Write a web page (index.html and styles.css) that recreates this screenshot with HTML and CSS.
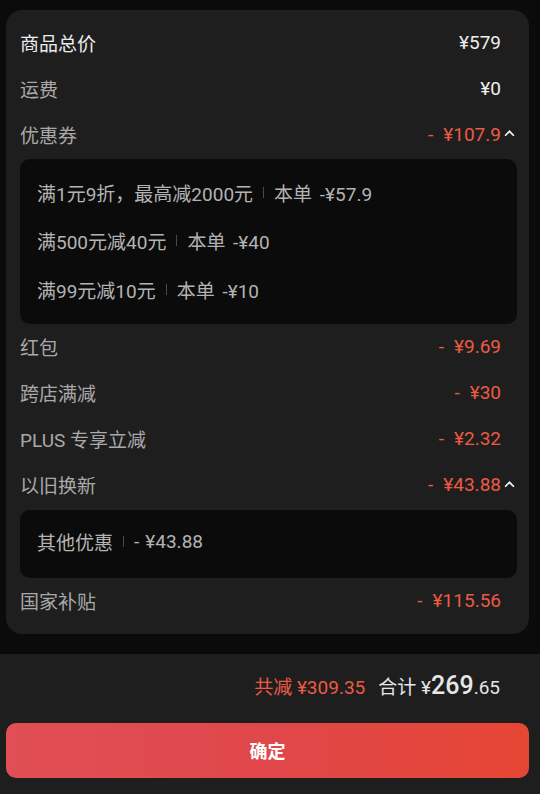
FILE: index.html
```html
<!DOCTYPE html>
<html lang="zh">
<head>
<meta charset="utf-8">
<link rel="stylesheet" href="styles.css">
</head>
<body>
<div class="page">
  <div class="card">
    <div class="row"><span class="label main">商品总价</span><span class="amt white">¥579</span></div>
    <div class="row"><span class="label">运费</span><span class="amt white">¥0</span></div>
    <div class="row"><span class="label">优惠券</span><span class="amt red">-<span class="gap"></span>¥107.9<svg class="caret" viewBox="0 0 10 7"><path d="M1 6 L5 2 L9 6" /></svg></span></div>
    <div class="box box-coupon">
      <div class="sub">满1元9折，最高减2000元<i class="sep"></i>本单 -¥57.9</div>
      <div class="sub">满500元减40元<i class="sep"></i>本单 -¥40</div>
      <div class="sub">满99元减10元<i class="sep"></i>本单 -¥10</div>
    </div>
    <div class="row"><span class="label">红包</span><span class="amt red">-<span class="gap"></span>¥9.69</span></div>
    <div class="row"><span class="label">跨店满减</span><span class="amt red">-<span class="gap"></span>¥30</span></div>
    <div class="row"><span class="label">PLUS 专享立减</span><span class="amt red">-<span class="gap"></span>¥2.32</span></div>
    <div class="row"><span class="label">以旧换新</span><span class="amt red">-<span class="gap"></span>¥43.88<svg class="caret" viewBox="0 0 10 7"><path d="M1 6 L5 2 L9 6" /></svg></span></div>
    <div class="box box-other">
      <div class="sub">其他优惠<i class="sep"></i>-<span class="gap-s"></span>¥43.88</div>
    </div>
    <div class="row"><span class="label">国家补贴</span><span class="amt red">-<span class="gap"></span>¥115.56</span></div>
  </div>
  <div class="footer">
    <div class="summary">
      <span class="saved">共减 ¥309.35</span>
      <span class="total">合计 ¥<b>269</b>.65</span>
    </div>
    <button class="confirm">确定</button>
  </div>
</div>
</body>
</html>
```
FILE: styles.css
```css
* { box-sizing: border-box; }
html, body {
  margin: 0;
  padding: 0;
  background: #0b0b0b;
  font-family: Roboto, "Noto Sans CJK SC", sans-serif;
}
.page {
  width: 540px;
  height: 794px;
  display: flex;
  flex-direction: column;
  padding-top: 10px;
}
.card {
  margin: 0 11px 0 6px;
  background: #1e1e1e;
  border-radius: 16px;
  padding: 11px 0 9px 0;
}
.row {
  height: 46px;
  display: flex;
  align-items: center;
  justify-content: space-between;
  padding: 0 28px 4px 14px;
  position: relative;
}
.label {
  font-size: 19px;
  color: #a9a9a9;
}
.label.main { color: #ececec; }
.amt {
  font-size: 19px;
  position: relative;
  display: inline-flex;
  align-items: center;
}
.gap { display: inline-block; width: 10px; }
.gap-s { display: inline-block; width: 6px; }
.amt.white { color: #efefef; }
.amt.red { color: #ec5a44; }
.caret {
  position: absolute;
  right: -14px;
  top: 50%;
  margin-top: -5px;
  width: 11px;
  height: 8px;
  fill: none;
  stroke: #f2f2f2;
  stroke-width: 1.6;
}
.box {
  margin: 0 12px 0 14px;
  background: #0b0b0b;
  border-radius: 10px;
}
.box-coupon { padding: 11px 0 8px; margin-bottom: 2px; }
.box-other { padding: 10px 0; margin-bottom: 1px; }
.sub {
  height: 48.5px;
  display: flex;
  align-items: center;
  padding-left: 17px;
  padding-bottom: 4px;
  font-size: 19px;
  color: #b3b3b3;
  word-spacing: 3px;
}
.sep {
  display: inline-block;
  width: 1px;
  height: 11px;
  background: #4a4a4a;
  margin: 0 10px;
}
.footer {
  margin-top: 20px;
  flex: 1;
  background: #1e1e1e;
  padding: 0 11px 0 6px;
  display: flex;
  flex-direction: column;
}
.summary {
  height: 67px;
  display: flex;
  align-items: center;
  justify-content: flex-end;
  padding-right: 29px;
  padding-bottom: 5px;
  gap: 13px;
}
.saved {
  color: #ec5a44;
  font-size: 19px;
}
.total {
  color: #e6e6e6;
  font-size: 19px;
}
.total b {
  font-weight: 500;
  font-size: 25px;
}
.confirm {
  margin-top: 2px;
  height: 55px;
  width: 100%;
  border: none;
  border-radius: 10px;
  background: linear-gradient(90deg, #e04f55 0%, #e0474a 50%, #e64634 100%);
  color: #ffffff;
  font-family: "Noto Sans CJK SC", sans-serif;
  font-size: 18px;
  font-weight: 700;
  padding-bottom: 3px;
}
```
